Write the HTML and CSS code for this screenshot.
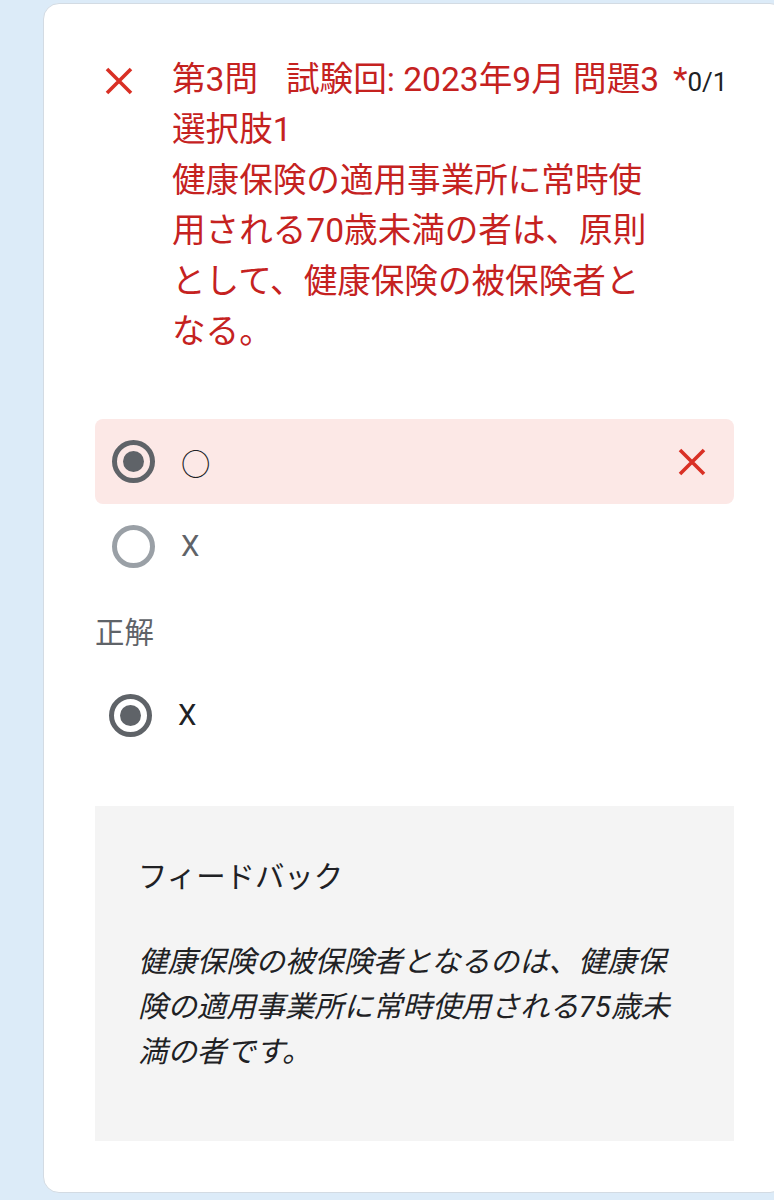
FILE: index.html
```html
<!DOCTYPE html>
<html lang="ja">

<head>
    <meta charset="UTF-8">
    <meta name="viewport" content="width=device-width, initial-scale=1.0">
    <title>フォーム結果</title>
    <link rel="stylesheet" href="styles.css">
</head>

<body>
    <div class="card">
        <div class="question">
            <svg class="mark" viewBox="0 0 30 30" width="30" height="30">
                <path d="M3 3 L27 27 M27 3 L3 27" stroke="#d93025" stroke-width="3.6" fill="none" />
            </svg>
            <div class="question-text">第3問<span class="gap"></span>試験回: 2023年9月 問題3<br>選択肢1<br>健康保険の適用事業所に常時使用される70歳未満の者は、原則として、健康保険の被保険者となる。</div>
            <div class="points"><span class="required">*</span>0/1</div>
        </div>

        <div class="options">
            <div class="option wrong">
                <span class="radio checked"></span>
                <span class="label dark">○</span>
                <svg class="cross" viewBox="0 0 30 30" width="30" height="30">
                    <path d="M3 3 L27 27 M27 3 L3 27" stroke="#d93025" stroke-width="3.6" fill="none" />
                </svg>
            </div>
            <div class="option">
                <span class="radio empty"></span>
                <span class="label">X</span>
            </div>
        </div>

        <div class="answer-title">正解</div>
        <div class="option answer">
            <span class="radio checked"></span>
            <span class="label dark">X</span>
        </div>

        <div class="feedback">
            <div class="feedback-title">フィードバック</div>
            <div class="feedback-body">健康保険の被保険者となるのは、健康保険の適用事業所に常時使用される75歳未満の者です。</div>
        </div>
    </div>
</body>

</html>
```

FILE: styles.css
```css
html,
body {
    overflow: hidden;
}

body {
    margin: 0;
    padding: 3px 0 0 43px;
    background-color: #dcebf8;
    font-family: Roboto, "Noto Sans CJK JP", sans-serif;
    color: #202124;
}

.card {
    box-sizing: border-box;
    width: 743px;
    padding: 51px;
    background-color: #fff;
    border: 1px solid #d3dbe3;
    border-radius: 16px;
}

.question {
    display: flex;
    align-items: flex-start;
}

.mark {
    flex: none;
    margin: 11px 0 0 9px;
}

.question-text {
    width: 495px;
    margin-left: 38px;
    font-size: 33.6px;
    line-height: 50.4px;
    color: #c5221f;
}

.gap {
    display: inline-block;
    width: 28px;
}

.points {
    margin-left: 6px;
    font-size: 26px;
    line-height: 50.4px;
    white-space: nowrap;
}

.required {
    font-size: 33.6px;
    color: #c5221f;
}

.options {
    margin-top: 62px;
}

.option {
    display: flex;
    align-items: center;
    height: 84px;
    padding: 0 27px 0 17px;
    border-radius: 8px;
}

.option.wrong {
    height: 85px;
    background-color: #fce8e6;
}

.option.answer {
    margin-top: 18px;
    padding-left: 14px;
}

.radio {
    box-sizing: border-box;
    flex: none;
    width: 43px;
    height: 43px;
    border: 5px solid #5f6368;
    border-radius: 50%;
    display: grid;
    place-items: center;
}

.radio.empty {
    border-color: #9aa0a6;
}

.radio.checked::after {
    content: '';
    width: 21px;
    height: 21px;
    border-radius: 50%;
    background-color: #5f6368;
}

.label {
    margin-left: 26px;
    font-size: 29.4px;
    color: #5f6368;
}

.label.dark {
    color: #202124;
}

.cross {
    margin-left: auto;
}

.answer-title {
    margin-top: 23px;
    font-size: 29.4px;
    line-height: 44px;
    color: #5f6368;
}

.feedback {
    margin-top: 49px;
    padding: 49px 43px 66px;
    background-color: #f4f4f4;
}

.feedback-title {
    font-size: 29.4px;
    line-height: 44px;
}

.feedback-body {
    margin-top: 41px;
    font-size: 29.4px;
    line-height: 45px;
    font-style: italic;
}
```
